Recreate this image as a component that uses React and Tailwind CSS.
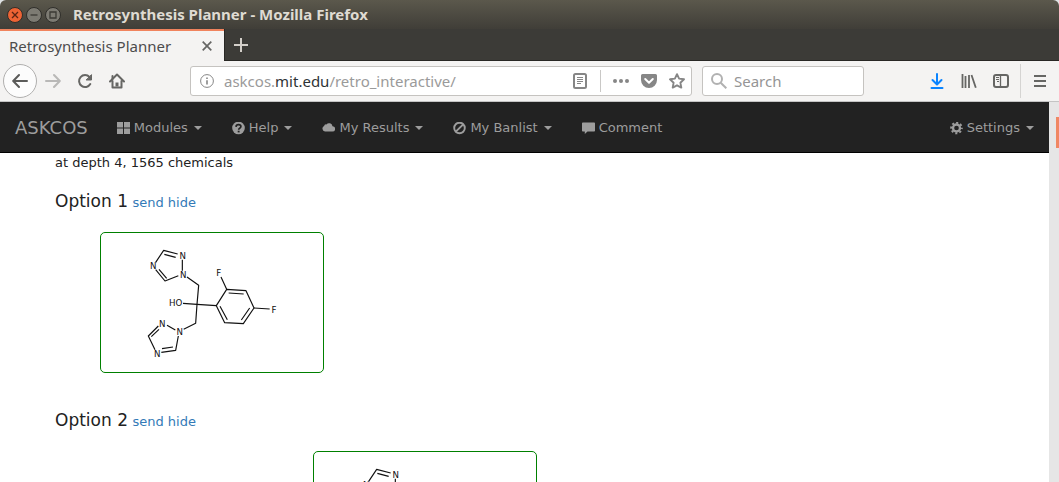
import React from "react";

const stroke = { fill: "none", stroke: "currentColor" };

function WindowButton({ label, tone, children }) {
  return (
    <button
      type="button"
      aria-label={label}
      className={`flex size-4 items-center justify-center rounded-full border border-[#2f2e2a] ${tone}`}
    >
      <svg viewBox="0 0 14 14" className="size-3.5 shrink-0" {...stroke} strokeWidth="1.3">
        {children}
      </svg>
    </button>
  );
}

function ToolButton({ label, className = "text-[#666664]", children }) {
  return (
    <button type="button" aria-label={label} className={`flex h-8 w-8 shrink-0 items-center justify-center ${className}`}>
      <svg viewBox="0 0 16 16" className="size-4" {...stroke} strokeWidth="2" strokeLinecap="round" strokeLinejoin="round">
        {children}
      </svg>
    </button>
  );
}

function TitleBar() {
  return (
    <header className="flex h-[29px] shrink-0 items-center rounded-t-md bg-linear-to-b from-[#5b584c] to-[#403e38] px-[7px]">
      <div className="flex gap-[3px]">
        <WindowButton label="Close" tone="bg-[#ee6334] text-[#5a2413]">
          <path d="M4 4l6 6M10 4l-6 6" />
        </WindowButton>
        <WindowButton label="Minimize" tone="bg-[#7d7b73] text-[#3b3a35]">
          <path d="M3.500 7h7" />
        </WindowButton>
        <WindowButton label="Maximize" tone="bg-[#7d7b73] text-[#3b3a35]">
          <path d="M4 4h6v6H4z" />
        </WindowButton>
      </div>
      <h1 className="ml-3 text-[15px] font-bold whitespace-nowrap text-[#dfdbd2]">Retrosynthesis Planner - Mozilla Firefox</h1>
    </header>
  );
}

function TabStrip() {
  return (
    <div className="flex h-8 shrink-0 bg-[#3c3b37]">
      <div className="flex w-56 items-center justify-between border-t-2 border-[#f0835d] bg-[#f4f3f2] pr-3 pl-[9px] text-[15px] text-[#4c4c4c]">
        <span>Retrosynthesis Planner</span>
        <button type="button" aria-label="Close tab" className="text-[#666664]">
          <svg viewBox="0 0 10 10" className="size-2.5" {...stroke} strokeWidth="1.7">
            <path d="M.7.7l8.6 8.6M9.3.7L.7 9.3" />
          </svg>
        </button>
      </div>
      <button type="button" aria-label="New tab" className="flex w-8 items-center justify-center border-b border-l border-[#282724] text-[#d3cfc9]">
        <svg viewBox="0 0 14 14" className="size-3.5" {...stroke} strokeWidth="2">
          <path d="M7 0v14M0 7h14" />
        </svg>
      </button>
      <div className="flex-1 border-b border-[#282724]" />
    </div>
  );
}

function Toolbar() {
  return (
    <div className="flex h-[41px] shrink-0 items-center border-b border-[#c4c4c4] bg-[#f4f3f2] px-[3px]">
      <button type="button" aria-label="Back" className="flex size-[34px] shrink-0 items-center justify-center rounded-full border border-[#b0afae] bg-[#fcfcfc] text-[#5b5b59]">
        <svg viewBox="0 0 16 16" className="size-4" {...stroke} strokeWidth="2" strokeLinecap="round" strokeLinejoin="round">
          <path d="M15 8H1.5M7 2L1.2 8 7 14" />
        </svg>
      </button>
      <ToolButton label="Forward" className="text-[#b9b8b7]">
        <path d="M1 8h13.500M9 2l5.800 6L9 14" />
      </ToolButton>
      <ToolButton label="Reload">
        <path d="M12.500 4A6 6 0 1 0 13.300 11" />
        <path d="M14.500 2v5h-5z" fill="currentColor" strokeWidth="1" />
      </ToolButton>
      <ToolButton label="Home">
        <path d="M1 8.500L8 1.500l7 7M3.500 8v6.500h9V8" />
        <path d="M8 9.500v4" strokeWidth="3" strokeLinecap="butt" />
        <path d="M3.500 3v3" />
      </ToolButton>
      <div className="w-[57px] shrink-0" />
      <div className="flex h-[30px] min-w-0 flex-1 items-center rounded-[3px] border border-[#c5c3c0] bg-white pr-1.5 pl-[9px] text-[#868686]">
        <button type="button" aria-label="Site information">
          <svg viewBox="0 0 14 14" className="size-3.5" {...stroke}>
            <circle cx="7" cy="7" r="6.4" />
            <path d="M7 6.200v4.300M7 3.500v1.500" strokeWidth="1.600" />
          </svg>
        </button>
        <div
          role="textbox"
          aria-label="Address"
          contentEditable
          suppressContentEditableWarning
          className="ml-2.5 min-w-0 flex-1 overflow-hidden text-[15px] whitespace-nowrap text-[#9a9a9a] outline-none"
        >
          askcos.<span className="text-[#2e3436]">mit.edu</span>/retro_interactive/
        </div>
        <button type="button" aria-label="Reader view">
          <svg viewBox="0 0 14 16" className="h-4 w-3.5" {...stroke}>
            <rect x="1" y="1" width="12" height="14" rx="1.5" strokeWidth="2" />
            <path d="M4 4.500h6M4 6.500h6M4 8.500h6M4 10.500h4" />
          </svg>
        </button>
        <div className="mr-3 ml-[13px] h-[22px] w-px bg-[#c9c8c6]" />
        <button type="button" aria-label="Page actions">
          <svg viewBox="0 0 16 16" className="size-4" fill="currentColor">
            <circle cx="2" cy="8" r="2" />
            <circle cx="8" cy="8" r="2" />
            <circle cx="14" cy="8" r="2" />
          </svg>
        </button>
        <button type="button" aria-label="Save to Pocket" className="ml-3">
          <svg viewBox="0 0 16 16" className="size-4" fill="currentColor">
            <path d="M1.500 1h13A1.500 1.500 0 0 1 16 2.500V7a8 8 0 0 1-16 0V2.500A1.500 1.500 0 0 1 1.500 1z" />
            <path d="M4.200 6L8 9.700 11.800 6" fill="none" stroke="white" strokeWidth="2" strokeLinecap="round" strokeLinejoin="round" />
          </svg>
        </button>
        <button type="button" aria-label="Bookmark this page" className="ml-3">
          <svg viewBox="0 0 16 16" className="size-4" {...stroke} strokeWidth="1.9" strokeLinejoin="round">
            <path d="M8 1.200l2.100 4.400 4.900.7-3.600 3.400.9 4.900L8 12.300l-4.300 2.300.9-4.900L1 6.300l4.900-.7z" />
          </svg>
        </button>
      </div>
      <label className="ml-2.5 flex h-[30px] w-[162px] shrink-0 items-center rounded-[3px] border border-[#c5c3c0] bg-white pl-2 text-[#b1b1b1]">
        <svg viewBox="0 0 16 16" className="size-4 shrink-0" {...stroke} strokeWidth="2" aria-hidden="true">
          <circle cx="6" cy="6" r="5" />
          <path d="M9.700 9.700l5.600 5.600" />
        </svg>
        <input type="text" aria-label="Search" placeholder="Search" className="ml-[7px] w-full min-w-0 text-[15px] text-[#2e3436] outline-none placeholder:text-[#959595]" />
      </label>
      <div className="w-[57px] shrink-0" />
      <ToolButton label="Downloads" className="text-[#0a84ff]">
        <path d="M8 1v10M3.500 7L8 11.500 12.500 7M2.500 15h11" />
      </ToolButton>
      <ToolButton label="Library">
        <path d="M1.500 1v14M4.500 3v12M8 2v13M10.500 2l4.300 12.700" strokeWidth="1.800" strokeLinecap="butt" />
      </ToolButton>
      <ToolButton label="Sidebars">
        <rect x="1" y="2" width="14" height="12" rx="2" />
        <path d="M7.500 2v12" strokeWidth="1.300" />
        <path d="M3 4.500h3M3 6.500h3M4 8.500h2" strokeWidth="1" strokeLinecap="butt" />
      </ToolButton>
      <div className="mx-[3px] h-[34px] w-px shrink-0 bg-[#d5d4d2]" />
      <ToolButton label="Open menu">
        <path d="M2 3h12M2 8h12M2 13h12" strokeLinecap="butt" />
      </ToolButton>
    </div>
  );
}

function Glyph({ children }) {
  return (
    <svg viewBox="0 0 13 13" className="mr-1 size-[13px] shrink-0" fill="currentColor" aria-hidden="true">
      {children}
    </svg>
  );
}

function NavItem({ icon, label, menu = true }) {
  return (
    <a href="#" className="flex items-center px-[15px] whitespace-nowrap">
      <Glyph>{icon}</Glyph>
      {label}
      {menu && (
        <svg viewBox="0 0 8 4" className="ml-1.5 h-1 w-2" fill="currentColor" aria-hidden="true">
          <path d="M0 0h8L4 4z" />
        </svg>
      )}
    </a>
  );
}

const icons = {
  modules: <path d="M0 0h6v5.500H0zM7 0h6v5.500H7zM0 6.500h6V12H0zM7 6.500h6V12H7z" />,
  help: (
    <>
      <circle cx="6.5" cy="6" r="6.3" />
      <path d="M4 4.800Q4.200 2.700 6.500 2.700 8.900 2.700 8.900 4.600 8.900 5.600 7.700 6.300 6.700 6.900 6.700 7.800" fill="none" stroke="#222" strokeWidth="1.700" />
      <path d="M5.700 8.700h1.900v1.700H5.700z" fill="#222" />
    </>
  ),
  results: <path d="M3 9.500a2.900 2.900 0 0 1-.9-5.500A2 2 0 0 1 4.400 2.400 3.500 3.500 0 0 1 10.500 4.200 2.650 2.650 0 0 1 10.500 9.500z" />,
  banlist: (
    <g fill="none" stroke="currentColor" strokeWidth="1.9">
      <circle cx="6.5" cy="6" r="5.3" />
      <path d="M2.800 9.700l7.400-7.400" />
    </g>
  ),
  comment: <path d="M.8.500h11.400q.8 0 .8.800v7.400q0 .8-.8.800H5.500L2.800 12V9.500h-2Q0 9.500 0 8.700V1.300Q0 .500.800.500z" />,
  settings: (
    <g fill="none" stroke="currentColor">
      <circle cx="6.500" cy="6" r="3.500" strokeWidth="2.300" />
      <circle cx="6.500" cy="6" r="5.300" strokeWidth="2" strokeDasharray="2.080 2.080" strokeDashoffset="1.040" />
    </g>
  ),
};

function SiteNav() {
  return (
    <nav className="flex h-[51px] shrink-0 items-stretch border-b border-black bg-[#222] pt-0.5 text-[13px] text-[#9d9d9d]">
      <a href="#" className="flex items-center pr-3.5 pl-[15px] text-lg">ASKCOS</a>
      <NavItem icon={icons.modules} label="Modules" />
      <NavItem icon={icons.help} label="Help" />
      <NavItem icon={icons.results} label="My Results" />
      <NavItem icon={icons.banlist} label="My Banlist" />
      <NavItem icon={icons.comment} label="Comment" menu={false} />
      <div className="ml-auto flex">
        <NavItem icon={icons.settings} label="Settings" />
      </div>
    </nav>
  );
}

function Molecule() {
  return (
    <svg viewBox="18 24 666 417" className="block h-[139px] w-[222px]" role="img" aria-label="Molecular structure">
      <g fill="none" stroke="#111" strokeWidth="3.5" strokeLinejoin="round">
        <path d="M248 87L206 76L182 112M242 97L208 88" />
        <path d="M262 104V137M250 152L210 168L182 134M215 160L192 133" />
        <path d="M276 156L311 181L306 238L302 295L266 313" />
        <path d="M264 235L306 238L364 242" />
        <path d="M364 242L395 193L453 197L477 249L445 296L389 293Z" />
        <path d="M401 204L446 207M464 249L439 285M375 244L397 284" />
        <path d="M395 193L378 156M477 249L524 252" />
        <path d="M241 315L216 301M190 303L160 333L180 374M192 313L169 335" />
        <path d="M250 333L242 376L199 382M234 366L201 371" />
      </g>
      <g fill="#111" fontSize="26" textAnchor="middle" className="font-['DejaVu_Sans',sans-serif]">
        <text x="263" y="102">N</text>
        <text x="175" y="133">N</text>
        <text x="265" y="158">N</text>
        <text x="371" y="152">F</text>
        <text x="537" y="263">F</text>
        <text x="242" y="244">HO</text>
        <text x="202" y="305">N</text>
        <text x="254" y="331">N</text>
        <text x="187" y="395">N</text>
      </g>
    </svg>
  );
}

function Option({ number, indent }) {
  return (
    <section>
      <h2 className="text-[17px] leading-5 text-[#222]">
        Option {number}{" "}
        <span className="-ml-px text-[13px] text-[#337ab7]">
          <a href="#">send</a> <a href="#">hide</a>
        </span>
      </h2>
      <div className={`mt-[19px] w-fit rounded-[5px] border border-[#008000] ${indent}`}>
        <Molecule />
      </div>
    </section>
  );
}

export default function App() {
  return (
    <div className="flex h-screen flex-col overflow-hidden bg-[#dfe3e5] font-['Noto_Sans',sans-serif]">
      <TitleBar />
      <TabStrip />
      <Toolbar />
      <div className="flex min-h-0 flex-1 bg-white font-['DejaVu_Sans',sans-serif]">
        <div className="flex min-w-0 flex-1 flex-col">
          <SiteNav />
          <main className="min-h-0 flex-1 overflow-hidden px-[55px] text-[13px] text-[#222]">
            <p className="leading-5">at depth 4, 1565 chemicals</p>
            <div className="mt-[18px] flex flex-col gap-[37px]">
              <Option number={1} indent="ml-[45px]" />
              <Option number={2} indent="ml-[258px]" />
            </div>
          </main>
        </div>
        <div className="flex w-2.5 justify-end bg-[#e6e6e6] pt-[15px]">
          <div className="h-[31px] w-[3px] bg-[#f08763]" />
        </div>
      </div>
    </div>
  );
}
